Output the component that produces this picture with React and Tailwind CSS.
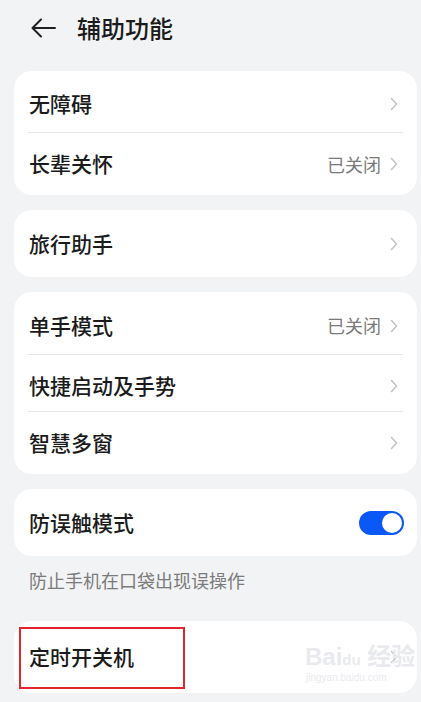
import React from "react";

const font = { fontFamily: '"Noto Sans CJK SC", "Noto Sans", sans-serif' };

function Chevron() {
  return (
    <svg width="8" height="14" viewBox="0 0 8 14" className="shrink-0">
      <path d="M1.5 1.5 L6.5 7 L1.5 12.5" fill="none" stroke="#c4c4c4" strokeWidth="1.6" strokeLinecap="round" strokeLinejoin="round" />
    </svg>
  );
}

function Row({ label, value, h = "h-[62px]", divider }) {
  return (
    <div>
      <div className={`${h} flex items-center pl-[15px] pr-[19px] ${divider ? "pt-[5px]" : ""}`}>
        <span className="flex-1 text-[21px] font-medium text-[#1b1b1b]">{label}</span>
        {value && <span className="mr-[9px] text-[18px] text-[#7a7a7a]">{value}</span>}
        <Chevron />
      </div>
      {divider && <div className="mx-[14px] h-px bg-[#e6e6e6]" />}
    </div>
  );
}

export default function App() {
  return (
    <div className="relative w-[421px] h-[702px] overflow-hidden bg-[#f1f3f5]" style={font}>
      <header className="h-[56px] flex items-center pl-[31px]">
        <svg width="25" height="20" viewBox="0 0 25 20">
          <path d="M24 10 H2 M10 1.5 L1.5 10 L10 18.5" fill="none" stroke="#1f1f1f" strokeWidth="2" strokeLinecap="round" strokeLinejoin="round" />
        </svg>
        <h1 className="ml-[21px] text-[24px] font-medium text-[#1b1b1b]">辅助功能</h1>
      </header>

      <div className="pl-[14px] pr-[4px] flex flex-col">
        <section className="mt-[15px] bg-white rounded-[18px]">
          <Row label="无障碍" divider h="h-[61px]" />
          <Row label="长辈关怀" value="已关闭" />
        </section>

        <section className="mt-[15px] bg-white rounded-[18px]">
          <Row label="旅行助手" h="h-[67px]" />
        </section>

        <section className="mt-[15px] bg-white rounded-[18px]">
          <Row label="单手模式" value="已关闭" divider h="h-[62px]" />
          <Row label="快捷启动及手势" divider h="h-[56px]" />
          <Row label="智慧多窗" h="h-[62px]" />
        </section>

        <section className="mt-[15px] bg-white rounded-[18px] h-[67px] flex items-center pl-[15px] pr-[13px]">
          <span className="flex-1 text-[21px] font-medium text-[#1b1b1b]">防误触模式</span>
          <div className="w-[45px] h-[24px] rounded-full bg-[#0a59f7] flex items-center justify-end pr-[2px]">
            <div className="w-[20px] h-[20px] rounded-full bg-white" />
          </div>
        </section>

        <p className="pl-[15px] pt-[11px] h-[65px] text-[18px] text-[#7b7b7b]">防止手机在口袋出现误操作</p>

        <section className="bg-white rounded-[18px] h-[72px] flex items-center pl-[15px] pr-[19px]">
          <span className="flex-1 text-[21px] font-medium text-[#1b1b1b]">定时开关机</span>
          <Chevron />
        </section>
      </div>

      <div className="absolute left-[19px] top-[627px] w-[166px] h-[62px] border-2 border-[#e3262e]" />

      <div className="absolute left-[305px] top-[645px] text-[24px] font-bold leading-none text-[#e9eaee]" style={{ fontFamily: '"Liberation Sans", "Noto Sans CJK SC", sans-serif' }}>
        Bai<span className="text-[15px]">du</span> 经验
      </div>
      <div className="absolute left-[306px] top-[673px] text-[10px] leading-none text-[#e9eaee]" style={{ fontFamily: '"Liberation Sans", sans-serif' }}>
        jingyan.baidu.com
      </div>
    </div>
  );
}
